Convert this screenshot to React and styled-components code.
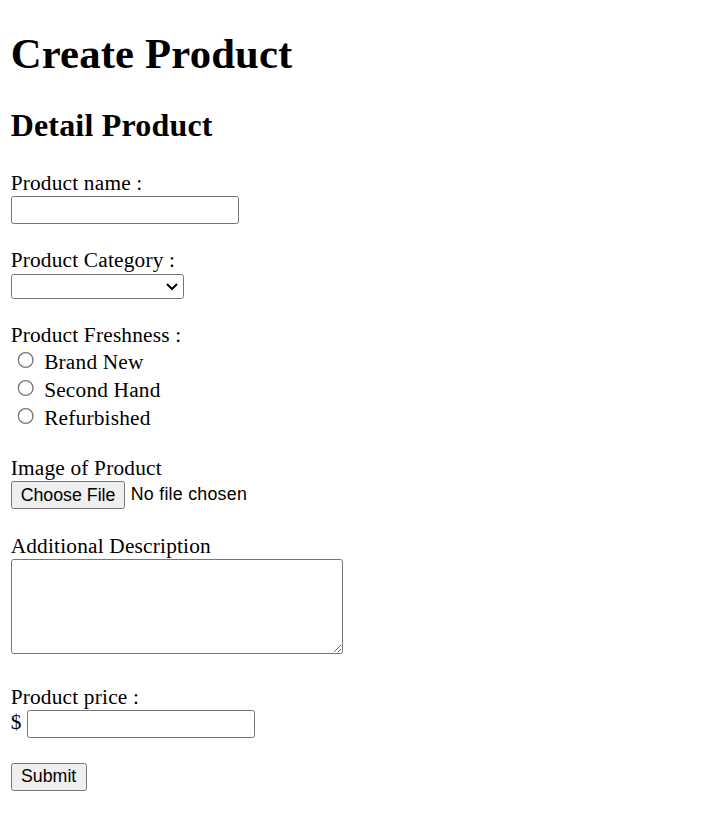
import React from "react";
import styled, { createGlobalStyle } from "styled-components";

const GlobalStyle = createGlobalStyle`
  html, body {
    margin: 0;
    padding: 0;
    background: #ffffff;
  }
`;

const Page = styled.div`
  zoom: 1.3333;
  margin: 8px;
  font-family: "Liberation Serif", "Times New Roman", serif;
  font-size: 16px;
  letter-spacing: 0.009em;
  color: #000000;
`;

const Title = styled.h1`
  font-size: 32px;
  font-weight: bold;
  margin: 21.9px 0 21.44px;
`;

const Subtitle = styled.h2`
  font-size: 24px;
  font-weight: bold;
  margin: 19.92px 0 20.4px;
`;

const Form = styled.form`
  display: flex;
  flex-direction: column;
  gap: 18.4px;
  align-items: flex-start;
`;

const Field = styled.div`
  display: block;
  margin-bottom: ${(p) => p.$extra || "0"};
`;

const Label = styled.label`
  display: block;
`;

const Line = styled.div`
  display: block;
  height: ${(p) => p.$height || "auto"};
`;

const controlFont = `
  font-family: "Liberation Sans", Arial, sans-serif;
  font-size: 13.333px;
`;

const TextInput = styled.input`
  ${controlFont}
  box-sizing: border-box;
  width: 171px;
  height: 21px;
  padding: 1px 2px;
  border: 1px solid #767676;
  border-radius: 2px;
  background: #ffffff;
`;

const Select = styled.select`
  ${controlFont}
  box-sizing: border-box;
  width: 130px;
  height: 19px;
  border: 1px solid #767676;
  border-radius: 2px;
  background: #ffffff;
`;

const RadioRow = styled.label`
  display: block;
  height: 21px;
`;

const Radio = styled.input`
  margin: 3px 3px 0 5px;
`;

const FileInput = styled.input`
  ${controlFont}
  letter-spacing: 0.2px;
`;

const TextArea = styled.textarea`
  box-sizing: border-box;
  width: 249px;
  height: 71px;
  border: 1px solid #767676;
  border-radius: 2px;
  padding: 2px;
  font-family: "Liberation Mono", monospace;
  font-size: 13.333px;
`;

const Button = styled.button`
  ${controlFont}
  box-sizing: border-box;
  width: 57px;
  height: 21px;
  padding: 1px 6px;
  background: #efefef;
  border: 1px solid #767676;
  border-radius: 2px;
  color: #000000;
`;

const freshness = ["Brand New", "Second Hand", "Refurbished"];

export default function App() {
  return (
    <>
      <GlobalStyle />
      <Page>
        <Title>Create Product</Title>
        <Subtitle>Detail Product</Subtitle>
        <Form onSubmit={(e) => e.preventDefault()}>
          <Field>
            <Label htmlFor="productName">Product name :</Label>
            <Line>
              <TextInput id="productName" type="text" />
            </Line>
          </Field>
          <Field $extra="-0.75px">
            <Label htmlFor="productCategory">Product Category :</Label>
            <Line>
              <Select id="productCategory" defaultValue="">
                <option value=""></option>
                <option value="electronics">Electronics</option>
                <option value="fashion">Fashion</option>
                <option value="home">Home</option>
              </Select>
            </Line>
          </Field>
          <Field>
            <Label>Product Freshness :</Label>
            {freshness.map((f) => (
              <RadioRow key={f}>
                <Radio type="radio" name="freshness" value={f} /> {f}
              </RadioRow>
            ))}
          </Field>
          <Field>
            <Label htmlFor="productImage">Image of Product</Label>
            <Line $height="21.2px">
              <FileInput id="productImage" type="file" />
            </Line>
          </Field>
          <Field $extra="0.75px">
            <Label htmlFor="description">Additional Description</Label>
            <Line>
              <TextArea id="description" />
            </Line>
          </Field>
          <Field>
            <Label htmlFor="price">Product price :</Label>
            <Line>
              $ <TextInput id="price" type="number" />
            </Line>
          </Field>
          <Field>
            <Button type="submit">Submit</Button>
          </Field>
        </Form>
      </Page>
    </>
  );
}
